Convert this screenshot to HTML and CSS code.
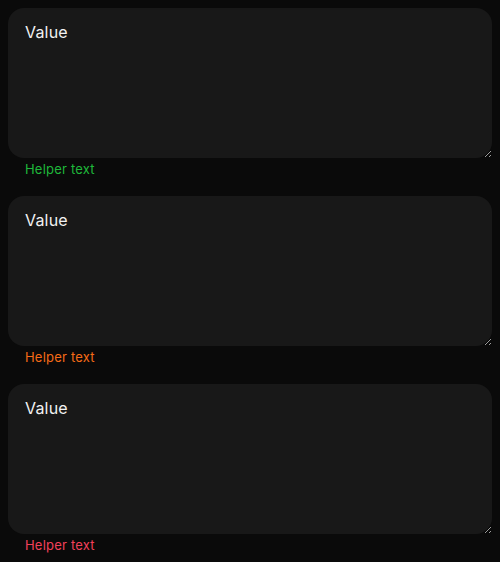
FILE: index.html
```html
<!DOCTYPE html>
<html>
<head>
<meta charset="utf-8">
<link rel="stylesheet" href="styles.css">
</head>
<body>
<div class="stack">
  <div class="field">
    <textarea class="input">Value</textarea>
    <div class="helper success">Helper text</div>
  </div>
  <div class="field">
    <textarea class="input">Value</textarea>
    <div class="helper warning">Helper text</div>
  </div>
  <div class="field">
    <textarea class="input">Value</textarea>
    <div class="helper error">Helper text</div>
  </div>
</div>
</body>
</html>
```
FILE: styles.css
```css
html, body {
  margin: 0;
  padding: 0;
  background: #0a0a0a;
}
.stack {
  display: flex;
  flex-direction: column;
  gap: 16px;
  padding: 8px;
}
.field {
  display: flex;
  flex-direction: column;
}
.input {
  box-sizing: border-box;
  width: 100%;
  height: 150px;
  margin: 0;
  border: none;
  outline: none;
  border-radius: 16px;
  background: #181818;
  color: #f2f2f2;
  font-family: Inter, sans-serif;
  font-size: 16px;
  font-weight: 400;
  letter-spacing: 0.2px;
  line-height: 24px;
  padding: 12px 17px;
  resize: vertical;
}
.helper {
  font-family: Inter, sans-serif;
  font-size: 13px;
  font-weight: 400;
  letter-spacing: 0.2px;
  line-height: 20px;
  padding: 1px 17px 1px;
}
.success { color: #1fb83a; }
.warning { color: #f56a17; }
.error { color: #f2405a; }
```
